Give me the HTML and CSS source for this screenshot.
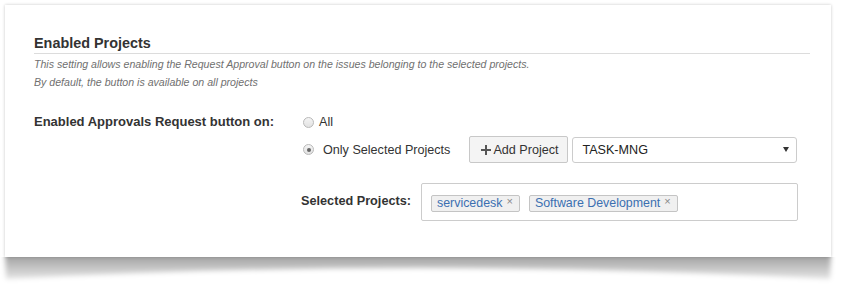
FILE: index.html
```html
<!DOCTYPE html>
<html lang="en">
<head>
  <meta charset="UTF-8">
  <meta name="viewport" content="width=device-width, initial-scale=1.0">
  <title>Enabled Projects</title>
  <link rel="stylesheet" href="styles.css">
</head>
<body>
  <div class="page">
    <section class="card">
      <h2 class="section-title">Enabled Projects</h2>
      <p class="desc">This setting allows enabling the Request Approval button on the issues belonging to the selected projects.</p>
      <p class="desc">By default, the button is available on all projects</p>

      <div class="form-row">
        <div class="field-label">Enabled Approvals Request button on:</div>
        <div class="field-body">
          <div class="radio-row">
            <span class="radio"></span>
            <span class="radio-text">All</span>
          </div>
          <div class="radio-row second">
            <span class="radio checked"></span>
            <span class="radio-text wide">Only Selected Projects</span>
            <button class="btn" type="button">
              <svg width="10" height="10" viewBox="0 0 10 10"><path d="M4 0h2v4h4v2H6v4H4V6H0V4h4z" fill="#555"/></svg>Add Project
            </button>
            <div class="select">
              <span>TASK-MNG</span>
              <svg width="6" height="5" viewBox="0 0 6 5"><path d="M0 0h6L3 5z" fill="#333"/></svg>
            </div>
          </div>
          <div class="selected-row">
            <div class="field-label small">Selected Projects:</div>
            <div class="tag-box">
              <span class="tag">servicedesk <span class="x">×</span></span>
              <span class="tag">Software Development <span class="x">×</span></span>
            </div>
          </div>
        </div>
      </div>
    </section>
    <!-- curled paper shadow under the card -->
    <svg class="card-shadow" width="836" height="30" viewBox="0 0 836 30">
      <defs>
        <filter id="soft" x="-5%" y="-50%" width="110%" height="200%">
          <feGaussianBlur stdDeviation="2.4"/>
        </filter>
        <linearGradient id="shade" x1="0" y1="0" x2="0" y2="1">
          <stop offset="0" stop-color="#000" stop-opacity="0.4"/>
          <stop offset="1" stop-color="#000" stop-opacity="0.1"/>
        </linearGradient>
      </defs>
      <path d="M5 -4 H831 L830 22 Q418 0 6 22 Z" fill="url(#shade)" filter="url(#soft)"/>
    </svg>
  </div>
</body>
</html>
```

FILE: styles.css
```css
body {
  margin: 0;
  font-family: 'Liberation Sans', Arial, sans-serif;
  background-color: #ffffff;
  color: #333;
}

.page {
  padding: 5px 14px 0 5px;
}

.card {
  position: relative;
  z-index: 1;
  width: 826px;
  height: 252px;
  box-sizing: border-box;
  padding: 30px 21px 0 29px;
  background: #ffffff;
  box-shadow: 0 0 3px rgba(0, 0, 0, 0.22);
}

.card-shadow {
  display: block;
  margin-left: -5px;
}

.section-title {
  margin: 0;
  font-size: 14.4px;
  line-height: 16px;
  font-weight: bold;
  color: #333;
  padding-bottom: 2px;
  border-bottom: 1px solid #dcdcdc;
}

.desc {
  margin: 0;
  font-size: 10.6px;
  line-height: 18px;
  font-style: italic;
  color: #707070;
}

.desc:first-of-type {
  margin-top: 1px;
}

.form-row {
  display: grid;
  grid-template-columns: 267px 1fr;
  margin-top: 19px;
}

.field-label {
  font-size: 13px;
  font-weight: bold;
  line-height: 24px;
  color: #333;
}

.radio-row {
  display: flex;
  align-items: center;
  height: 24px;
  font-size: 12.6px;
}

.radio-row.second {
  height: 27px;
  margin-top: 2px;
}

.radio {
  position: relative;
  width: 9px;
  height: 9px;
  margin-left: 2px;
  border: 1px solid #b9b9b9;
  border-radius: 50%;
  background: linear-gradient(#f4f4f4, #e2e2e2);
}

.radio.checked::after {
  content: "";
  position: absolute;
  left: 2.5px;
  top: 2.5px;
  width: 4px;
  height: 4px;
  border-radius: 50%;
  background: #666;
}

.radio-text {
  margin-left: 5px;
  color: #333;
}

.radio-text.wide {
  margin-left: 9px;
}

.btn {
  display: flex;
  align-items: center;
  gap: 2px;
  height: 27px;
  width: 99px;
  margin-left: 19px;
  padding: 0 0 0 11px;
  box-sizing: border-box;
  font-family: inherit;
  font-size: 12.6px;
  color: #333;
  background: #f4f4f4;
  border: 1px solid #c8c8c8;
  border-radius: 2px;
}

.select {
  display: flex;
  align-items: center;
  justify-content: space-between;
  box-sizing: border-box;
  width: 225px;
  height: 26px;
  margin-left: 4px;
  padding: 0 7px 0 9px;
  border: 1px solid #cccccc;
  border-radius: 3px;
  background: #fff;
  font-size: 12.6px;
  color: #222;
}

.selected-row {
  display: flex;
  align-items: center;
  gap: 10px;
  margin-top: 20px;
}

.field-label.small {
  margin-top: -3px;
  font-size: 12.7px;
}

.tag-box {
  display: flex;
  align-items: flex-end;
  gap: 9px;
  box-sizing: border-box;
  width: 377px;
  height: 38px;
  padding: 0 9px 8px;
  border: 1px solid #cccccc;
  border-radius: 2px;
}

.tag {
  display: inline-flex;
  align-items: center;
  height: 15px;
  padding: 0 6px 0 5px;
  font-size: 12.4px;
  line-height: 15px;
  color: #3b6fb0;
  background: #f0f0f0;
  border: 1px solid #c4c4c4;
  border-radius: 2px;
}

.tag .x {
  margin-left: 4px;
  margin-top: -4px;
  font-size: 11px;
  color: #888;
}
```
